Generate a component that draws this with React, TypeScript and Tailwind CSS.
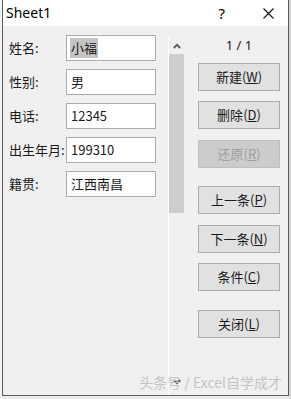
import React from 'react';

const FIELDS = [
  { label: '姓名:', value: '小福', selected: true },
  { label: '性别:', value: '男' },
  { label: '电话:', value: '12345' },
  { label: '出生年月:', value: '199310' },
  { label: '籍贯:', value: '江西南昌' },
];

const CJK = "font-['Microsoft_YaHei','Noto_Sans_CJK_SC',sans-serif]";

const FormButton: React.FC<{ text: string; hotkey: string; disabled?: boolean; className?: string }> = ({ text, hotkey, disabled, className }) => (
  <div
    className={`w-[82px] h-[28px] flex items-center justify-center border text-[13px] ${
      disabled ? 'bg-[#cccccc] border-[#bfbfbf] text-[#a0a0a0]' : 'bg-[#e1e1e1] border-[#adadad] text-[#1a1a1a]'
    } ${className ?? ''}`}
  >
    <span>
      {text}(<u className="underline-offset-1">{hotkey}</u>)
    </span>
  </div>
);

export default function App() {
  return (
    <div className={`w-[291px] h-[399px] flex bg-[#ececec] overflow-hidden ${CJK}`}>
      {/* sheet behind on the left */}
      <div className="w-[2px] h-full bg-[#f4f4f4]" />

      {/* dialog */}
      <div className="w-[287px] h-[396px] flex flex-col border-x border-b border-[#5a5a5a] bg-[#f0f0f0]">
        {/* title bar */}
        <div className="h-[26px] bg-white flex items-center pl-[3px] pr-[14px] text-[14px] text-black">
          <span className="font-['Noto_Sans',sans-serif] leading-none">Sheet1</span>
          <span className="ml-auto mr-[38px] font-['Noto_Sans',sans-serif] text-[15px] leading-none">?</span>
          <svg width="11" height="11" viewBox="0 0 11 11" className="mt-[1px]">
            <path d="M0.5 0.5 L10.5 10.5 M10.5 0.5 L0.5 10.5" stroke="#111" strokeWidth="1.1" />
          </svg>
        </div>

        {/* body */}
        <div className="flex-1 flex relative">
          {/* fields */}
          <div className="w-[165px] flex flex-col gap-[8px] pt-[9px] pl-[6px]">
            {FIELDS.map((f) => (
              <div key={f.label} className="flex items-center h-[26px]">
                <span className="w-[57px] text-[13px] text-[#1a1a1a] whitespace-nowrap">{f.label}</span>
                <div className="w-[90px] h-[26px] bg-white border border-[#ababab] flex items-center pl-[3px] text-[13px] text-[#1a1a1a]">
                  {f.selected ? <span className="bg-[#c4c4c4] px-[1px]">{f.value}</span> : <span className="px-[1px]">{f.value}</span>}
                </div>
              </div>
            ))}
          </div>

          {/* scrollbar */}
          <div className="w-[17px] flex mt-[11px]">
            <div className="w-[1px] bg-white" />
            <div className="w-[16px] flex flex-col items-start">
              <div className="h-[17px] w-[15px] flex items-center justify-center">
                <svg width="8" height="6" viewBox="0 0 8 6">
                  <path d="M0.8 5 L4 1.8 L7.2 5" stroke="#5a5a5a" strokeWidth="1.8" fill="none" />
                </svg>
              </div>
              <div className="w-[15px] h-[159px] bg-[#cdcdcd]" />
              <div className="mt-auto mb-[8px] h-[10px] w-[15px] flex items-center justify-center">
                <svg width="8" height="6" viewBox="0 0 8 6">
                  <path d="M0.8 1 L4 4.2 L7.2 1" stroke="#5a5a5a" strokeWidth="1.8" fill="none" />
                </svg>
              </div>
            </div>
          </div>

          {/* buttons */}
          <div className="flex flex-col pl-[13px] pt-[12px]">
            <div className="w-[82px] text-center text-[13px] text-[#1a1a1a] leading-none font-['Noto_Sans',sans-serif] h-[25px] pt-[1px]">1 / 1</div>
            <FormButton text="新建" hotkey="W" />
            <FormButton text="删除" hotkey="D" className="mt-[10px]" />
            <FormButton text="还原" hotkey="R" disabled className="mt-[11px]" />
            <FormButton text="上一条" hotkey="P" className="mt-[18px]" />
            <FormButton text="下一条" hotkey="N" className="mt-[11px]" />
            <FormButton text="条件" hotkey="C" className="mt-[10px]" />
            <FormButton text="关闭" hotkey="L" className="mt-[19px]" />
          </div>

          {/* watermark */}
          <div className="absolute right-[6px] bottom-[2px] text-[14px] text-[#c4c4c4] whitespace-nowrap">
            头条号 / Excel自学成才
          </div>
        </div>
      </div>

      <div className="flex-1 h-full bg-[#d6d6d6]" />
    </div>
  );
}
